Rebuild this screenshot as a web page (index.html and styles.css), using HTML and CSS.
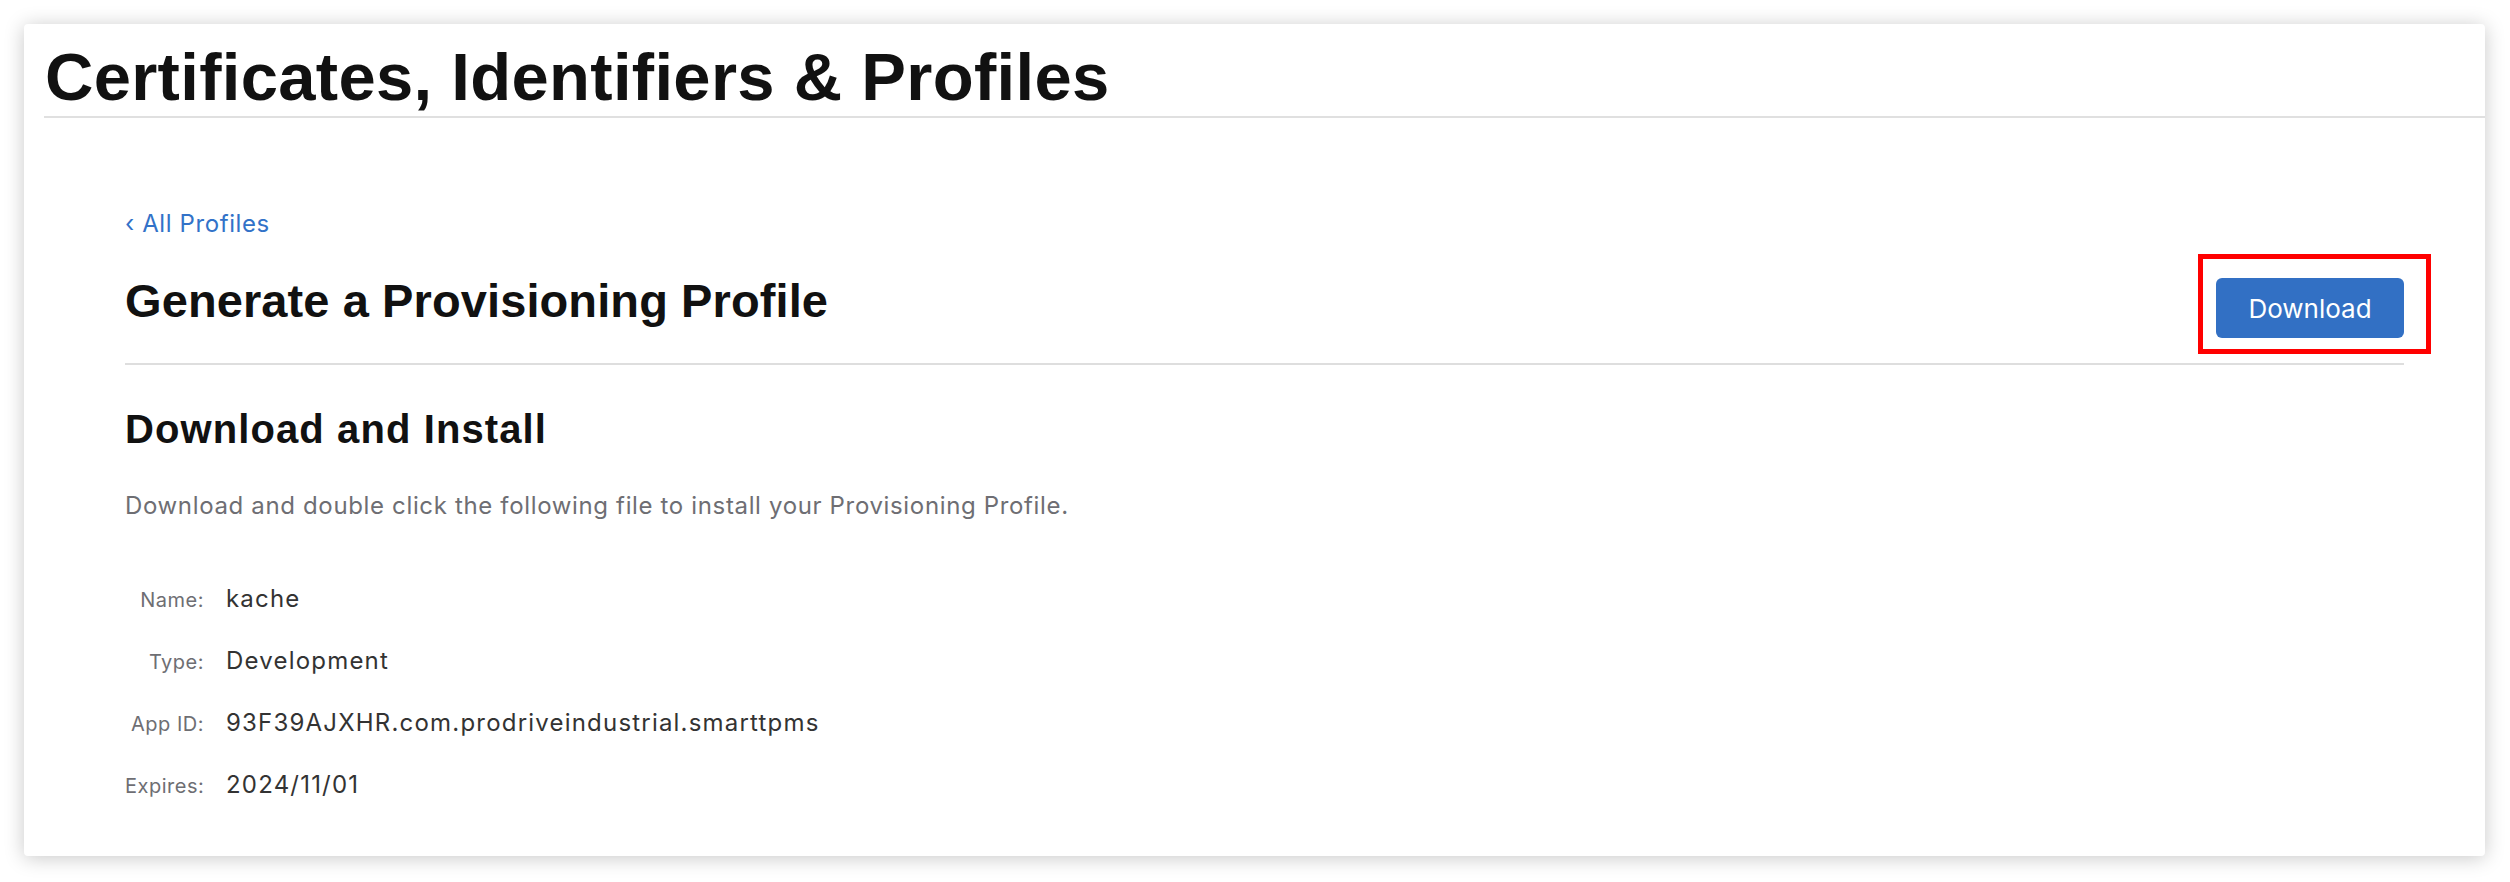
FILE: index.html
```html
<!DOCTYPE html>
<html lang="en">
<head>
<meta charset="utf-8">
<title>Certificates, Identifiers &amp; Profiles</title>
<link rel="stylesheet" href="styles.css">
</head>
<body>
<div class="card">
  <header class="page-header">
    <h1 class="page-title">Certificates, Identifiers &amp; Profiles</h1>
  </header>
  <main class="content">
    <a class="back-link" href="#">‹ All Profiles</a>
    <div class="title-row">
      <h2 class="section-title">Generate a Provisioning Profile</h2>
      <div class="action">
        <button class="btn-primary" type="button">Download</button>
        <span class="highlight"></span>
      </div>
    </div>
    <div class="divider"></div>
    <h3 class="sub-title">Download and Install</h3>
    <p class="description">Download and double click the following file to install your Provisioning Profile.</p>
    <dl class="details">
      <dt>Name:</dt><dd>kache</dd>
      <dt>Type:</dt><dd>Development</dd>
      <dt>App ID:</dt><dd>93F39AJXHR.com.prodriveindustrial.smarttpms</dd>
      <dt>Expires:</dt><dd>2024/11/01</dd>
    </dl>
  </main>
</div>
</body>
</html>
```
FILE: styles.css
```css
* { box-sizing: border-box; }
html, body { margin: 0; padding: 0; background: #ffffff; }
body {
  font-family: "Liberation Sans", Arial, sans-serif;
  color: #1d1d1f;
  padding: 24px 25px 25px 24px;
}
.card {
  background: #fff;
  border-radius: 4px;
  box-shadow: 0 2px 20px rgba(0, 0, 0, 0.22);
  padding: 20px 0 57px 0;
}
.page-header {
  margin-left: 20px;
  padding-left: 1px;
  padding-bottom: 6px;
  border-bottom: 2px solid #e0e0e0;
}
.page-title {
  margin: 0;
  font-size: 67px;
  line-height: 66px;
  font-weight: 700;
  color: #111;
  letter-spacing: 0.3px;
}
.content {
  padding: 92px 81px 0 101px;
}
.back-link {
  display: block;
  font-family: "Inter", "Liberation Sans", sans-serif;
  font-size: 24px;
  line-height: 28px;
  letter-spacing: 0.6px;
  color: #3272c8;
  text-decoration: none;
}
.title-row {
  display: flex;
  justify-content: space-between;
  align-items: flex-start;
  margin-top: 35px;
}
.section-title {
  margin: 0;
  font-size: 47px;
  line-height: 56px;
  font-weight: 700;
  color: #111;
  letter-spacing: 0.1px;
}
.action {
  position: relative;
  margin-top: 5px;
}
.btn-primary {
  display: block;
  width: 188px;
  height: 60px;
  border: none;
  border-radius: 6px;
  background: #3270c4;
  color: #fff;
  font-family: "Inter", "Liberation Sans", sans-serif;
  font-size: 26px;
  padding: 0;
}
.highlight {
  position: absolute;
  left: -18px;
  top: -24px;
  right: -27px;
  bottom: -16px;
  border: 5px solid #ff0000;
  pointer-events: none;
}
.divider {
  height: 2px;
  background: #dedede;
  margin-top: 25px;
}
.sub-title {
  margin: 40px 0 0 0;
  font-size: 40px;
  line-height: 48px;
  font-weight: 700;
  color: #111;
  letter-spacing: 1.1px;
}
.description {
  margin: 39px 0 0 0;
  font-family: "Inter", "Liberation Sans", sans-serif;
  font-size: 24px;
  line-height: 28px;
  letter-spacing: 0.65px;
  color: #6e6e73;
}
.details {
  display: grid;
  grid-template-columns: 79px auto;
  column-gap: 22px;
  row-gap: 34px;
  align-items: baseline;
  justify-content: start;
  margin: 65px 0 0 0;
  font-family: "Inter", "Liberation Sans", sans-serif;
}
.details dt {
  text-align: right;
  font-size: 20px;
  letter-spacing: 0.5px;
  color: #6e6e73;
  white-space: nowrap;
}
.details dd {
  margin: 0;
  font-size: 24px;
  line-height: 28px;
  letter-spacing: 1.2px;
  color: #333;
}
```
